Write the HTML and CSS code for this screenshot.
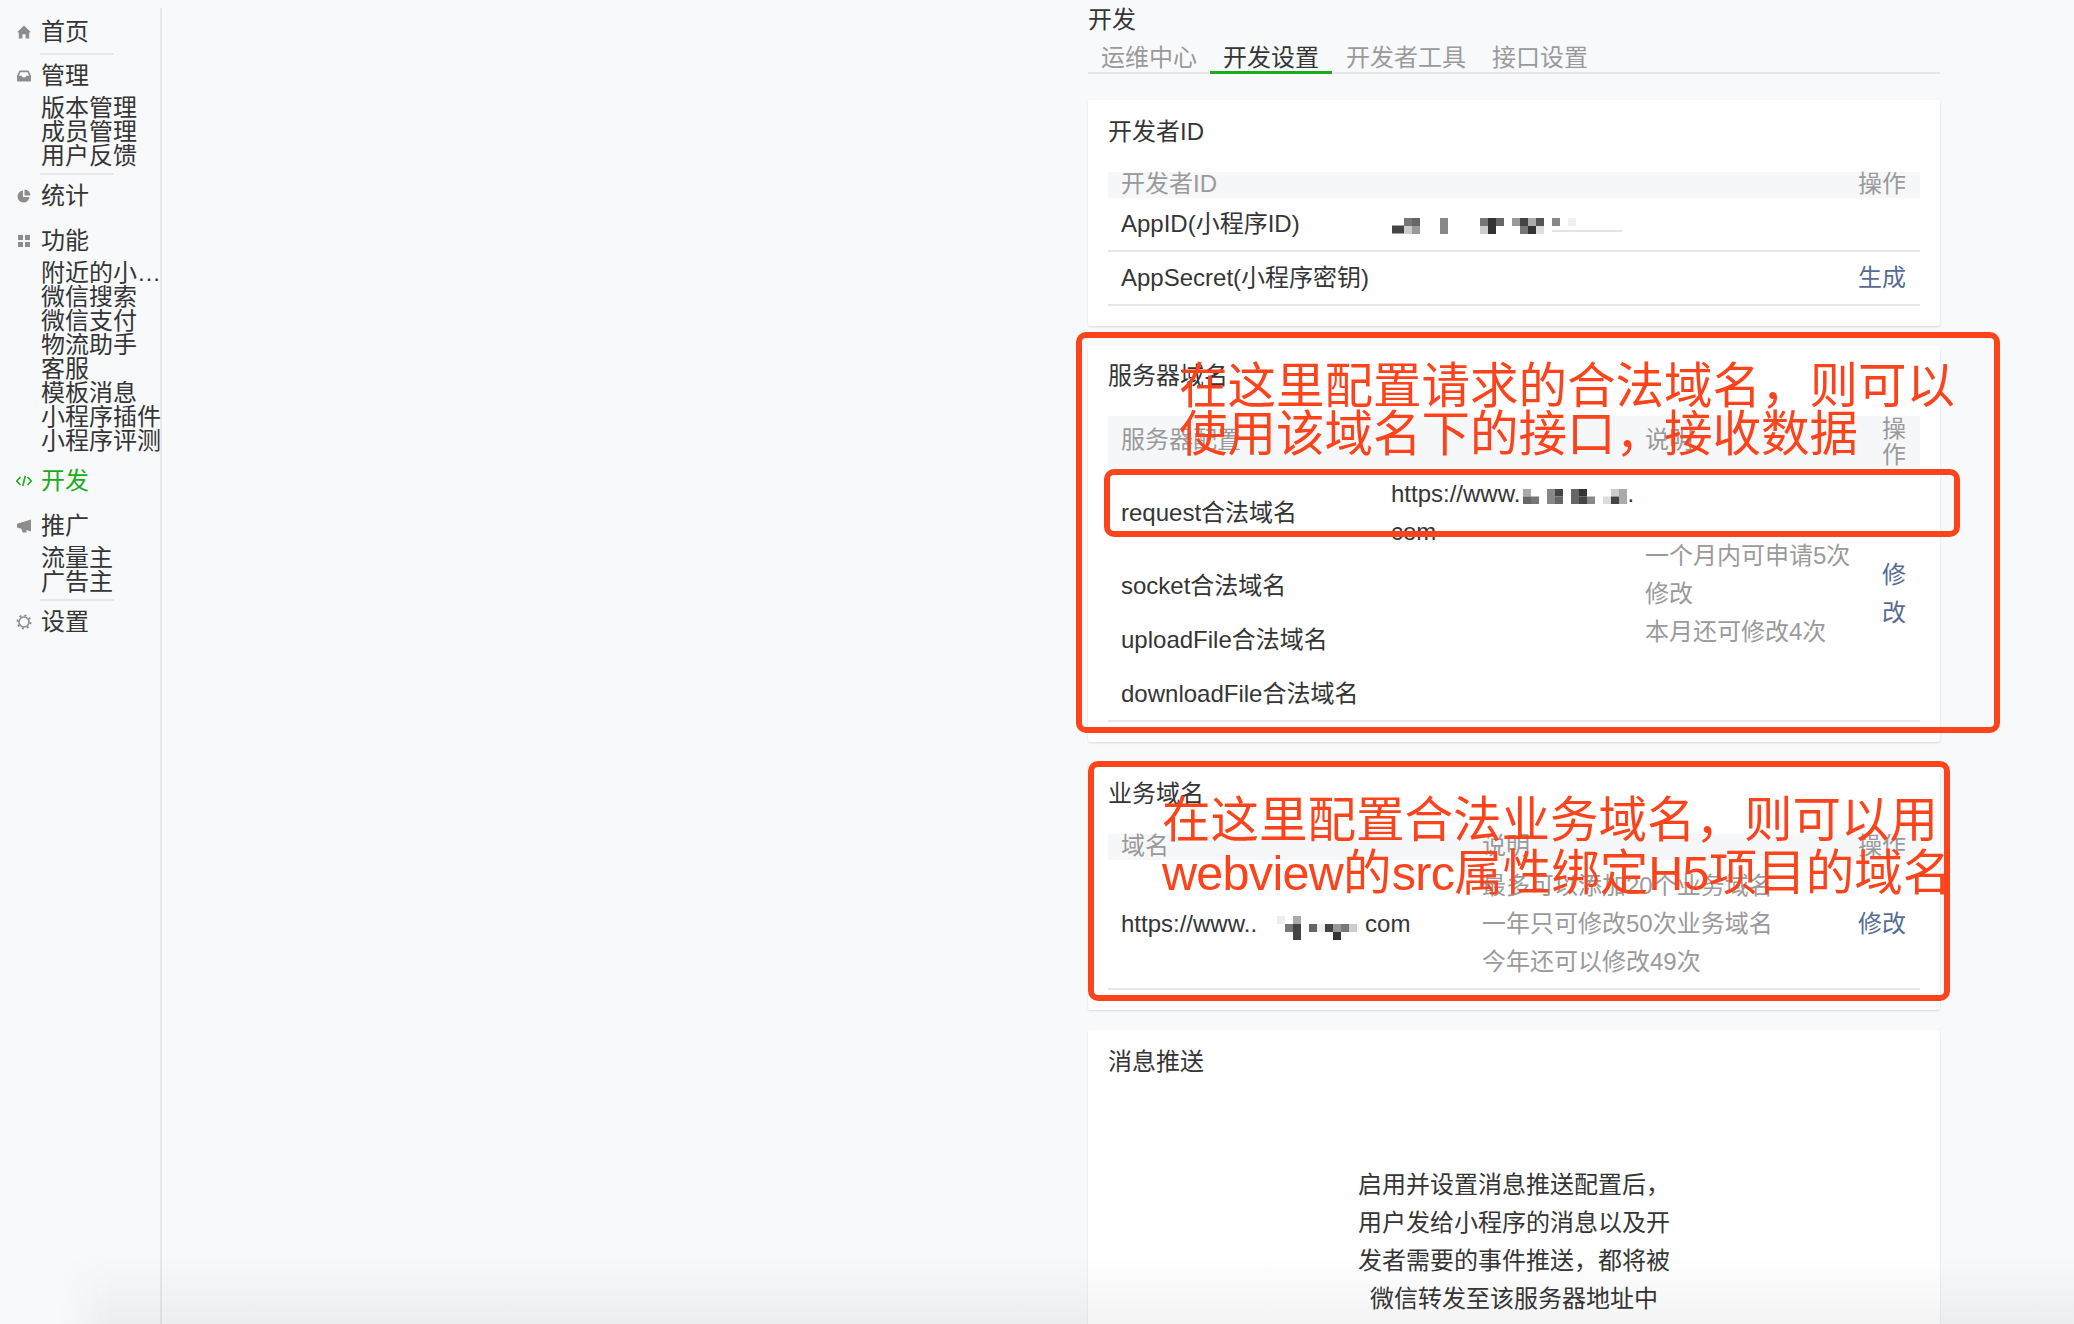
FILE: index.html
```html
<!DOCTYPE html>
<html lang="zh-CN">
<head>
<meta charset="utf-8">
<title>开发设置</title>
<link rel="stylesheet" href="styles.css">
</head>
<body>
<div class="page">
  <nav class="sidebar">
    <section class="group line">
      <div class="nav-title">
        <svg class="ico" viewBox="0 0 14 14"><path d="M7 .5l7 6.800h-1.800v6.200H8.600V9.300H5.400v4.200H1.800V7.300H0z"/></svg>
        <span>首页</span>
      </div>
    </section>
    <section class="group line has-list">
      <div class="nav-title">
        <svg class="ico" viewBox="0 0 14 14"><path d="M2.400 1.500h9.200L14 7v4.200a1.300 1.300 0 0 1-1.300 1.300H1.300A1.300 1.300 0 0 1 0 11.200V7z"/><path class="cut" d="M3.300 3.200h7.400L12 6.800H9.200a2.200 1.800 0 0 1-4.400 0H2z"/></svg>
        <span>管理</span>
      </div>
      <ul class="sub"><li>版本管理</li><li>成员管理</li><li>用户反馈</li></ul>
    </section>
    <section class="group">
      <div class="nav-title">
        <svg class="ico" viewBox="0 0 14 14"><path d="M6 1.500A6 6 0 1 0 12.500 8H6z"/><path d="M7.500 .500A6 6 0 0 1 13.500 6.500H7.500z"/></svg>
        <span>统计</span>
      </div>
    </section>
    <section class="group has-list">
      <div class="nav-title">
        <svg class="ico" viewBox="0 0 14 14"><rect x="1" y="1" width="5" height="5"/><rect x="8" y="1" width="5" height="5"/><rect x="1" y="8" width="5" height="5"/><rect x="8" y="8" width="5" height="5"/></svg>
        <span>功能</span>
      </div>
      <ul class="sub">
        <li>附近的小程序</li><li>微信搜索</li><li>微信支付</li><li>物流助手</li><li>客服</li><li>模板消息</li><li>小程序插件</li><li>小程序评测</li>
      </ul>
    </section>
    <section class="group">
      <div class="nav-title active">
        <svg class="ico ico-code" viewBox="0 0 16 14"><path d="M4.500 3L.8 7l3.700 4M11.500 3l3.700 4-3.700 4M9.300 2L6.700 12"/></svg>
        <span>开发</span>
      </div>
    </section>
    <section class="group line has-list">
      <div class="nav-title">
        <svg class="ico" viewBox="0 0 14 14"><path d="M0 4.800L14 .5v12l-4.800-1.600.6 2.600H5.600L4.300 9.700 0 8.500z"/></svg>
        <span>推广</span>
      </div>
      <ul class="sub"><li>流量主</li><li>广告主</li></ul>
    </section>
    <section class="group">
      <div class="nav-title">
        <svg class="ico ico-gear" viewBox="0 0 16 16"><circle class="ring" cx="8" cy="8" r="5"/><circle class="teeth" cx="8" cy="8" r="6.600"/></svg>
        <span>设置</span>
      </div>
    </section>
  </nav>

  <main class="main">
    <h1 class="page-title">开发</h1>
    <div class="tabs">
      <a class="tab">运维中心</a>
      <a class="tab active">开发设置</a>
      <a class="tab">开发者工具</a>
      <a class="tab">接口设置</a>
    </div>

    <section class="card">
      <h2 class="card-title">开发者ID</h2>
      <table class="tbl t-id">
        <colgroup><col class="c-a"><col><col class="c-op"></colgroup>
        <thead><tr><th>开发者ID</th><th></th><th>操作</th></tr></thead>
        <tbody>
          <tr>
            <td>AppID(小程序ID)</td>
            <td>
              <svg class="mask mask-id" viewBox="0 0 240 16">
                <rect x="3" y="7.500" width="12" height="8" fill="#444"/><rect x="15" y="0" width="8" height="8" fill="#777"/><rect x="23" y="0" width="8" height="8" fill="#666"/><rect x="15" y="8" width="8" height="8" fill="#ccc"/><rect x="23" y="8" width="8" height="8" fill="#999"/>
                <rect x="51" y="0" width="8" height="16" fill="#888"/>
                <rect x="91" y="0" width="8" height="8" fill="#777"/><rect x="99" y="0" width="8" height="16" fill="#333"/><rect x="107" y="0" width="8" height="8" fill="#666"/><rect x="91" y="8" width="8" height="8" fill="#ccc"/>
                <rect x="123" y="0" width="8" height="8" fill="#999"/><rect x="131" y="0" width="8" height="8" fill="#444"/><rect x="139" y="0" width="8" height="8" fill="#aaa"/><rect x="147" y="0" width="8" height="8" fill="#555"/><rect x="131" y="8" width="8" height="8" fill="#777"/><rect x="139" y="8" width="8" height="8" fill="#333"/><rect x="147" y="8" width="8" height="8" fill="#ddd"/>
                <rect x="163" y="0" width="8" height="8" fill="#888"/><rect x="179" y="0" width="8" height="8" fill="#f0f0f0"/><rect x="163" y="12" width="70" height="2" fill="#e4e4e4"/>
              </svg>
            </td>
            <td></td>
          </tr>
          <tr>
            <td>AppSecret(小程序密钥)</td>
            <td></td>
            <td><a class="link">生成</a></td>
          </tr>
        </tbody>
      </table>
    </section>

    <section class="card card-tight">
      <h2 class="card-title">服务器域名</h2>
      <table class="tbl t-server">
        <colgroup><col class="c-a"><col class="c-b"><col class="c-c"><col class="c-d"></colgroup>
        <thead><tr><th>服务器配置</th><th></th><th>说明</th><th>操作</th></tr></thead>
        <tbody class="quiet">
          <tr>
            <td>request合法域名</td>
            <td><span class="url">https://www.<svg class="mask mask-url" viewBox="0 0 104 15">
                <rect x="0" y="0" width="8" height="7.500" fill="#aaa"/><rect x="0" y="7.500" width="8" height="7.500" fill="#666"/><rect x="8" y="7.500" width="8" height="7.500" fill="#777"/>
                <rect x="24" y="0" width="8" height="15" fill="#888"/><rect x="32" y="0" width="8" height="7.500" fill="#444"/><rect x="32" y="7.500" width="8" height="7.500" fill="#666"/>
                <rect x="48" y="0" width="8" height="15" fill="#666"/><rect x="56" y="0" width="8" height="7.500" fill="#333"/><rect x="56" y="7.500" width="8" height="7.500" fill="#444"/><rect x="64" y="7.500" width="8" height="7.500" fill="#888"/>
                <rect x="80" y="7.500" width="8" height="7.500" fill="#ddd"/><rect x="88" y="0" width="8" height="7.500" fill="#ccc"/><rect x="96" y="0" width="8" height="15" fill="#aaa"/><rect x="88" y="7.500" width="8" height="7.500" fill="#444"/>
              </svg>.</span><br>com</td>
            <td rowspan="4" class="note">一个月内可申请5次修改<br>本月还可修改4次</td>
            <td rowspan="4"><a class="link">修改</a></td>
          </tr>
          <tr><td>socket合法域名</td><td></td></tr>
          <tr><td>uploadFile合法域名</td><td></td></tr>
          <tr class="last"><td>downloadFile合法域名</td><td></td></tr>
        </tbody>
      </table>
    </section>

    <section class="card">
      <h2 class="card-title">业务域名</h2>
      <table class="tbl t-biz">
        <colgroup><col class="c-a"><col><col class="c-op"></colgroup>
        <thead><tr><th>域名</th><th>说明</th><th>操作</th></tr></thead>
        <tbody>
          <tr>
            <td>https://www..<svg class="mask mask-biz" viewBox="0 0 80 24">
                <rect x="0" y="0" width="8" height="8" fill="#eee"/><rect x="16" y="0" width="8" height="8" fill="#aaa"/>
                <rect x="8" y="8" width="8" height="8" fill="#777"/><rect x="16" y="8" width="8" height="16" fill="#444"/>
                <rect x="32" y="8" width="8" height="8" fill="#666"/><rect x="40" y="8" width="8" height="8" fill="#eee"/><rect x="48" y="8" width="8" height="8" fill="#444"/><rect x="56" y="8" width="8" height="8" fill="#999"/><rect x="64" y="8" width="8" height="8" fill="#777"/><rect x="72" y="8" width="8" height="8" fill="#ccc"/>
                <rect x="56" y="16" width="8" height="8" fill="#333"/>
              </svg>com</td>
            <td class="note">最多可以添加20个业务域名<br>一年只可修改50次业务域名<br>今年还可以修改49次</td>
            <td><a class="link">修改</a></td>
          </tr>
        </tbody>
      </table>
    </section>

    <section class="card">
      <h2 class="card-title">消息推送</h2>
      <p class="intro">启用并设置消息推送配置后，用户发给小程序的消息以及开发者需要的事件推送，都将被微信转发至该服务器地址中</p>
    </section>

    <div class="mark mark-a"></div>
    <div class="mark mark-b"></div>
    <div class="mark mark-c"></div>
    <p class="callout callout-a">在这里配置请求的合法域名，则可以<br>使用该域名下的接口，接收数据</p>
    <p class="callout callout-b">在这里配置合法业务域名，则可以用<br><span class="latin">webview</span>的<span class="latin">src</span>属性绑定<span class="latin">H5</span>项目的域名</p>
  </main>
</div>
<div class="fade"></div>
</body>
</html>
```

FILE: styles.css
```css
* { box-sizing: border-box; }

html, body {
  margin: 0;
  height: 1324px;
  overflow: hidden;
  background: #f8f9fb;
}

body {
  position: relative;
  font-family: "Liberation Sans", "Noto Sans CJK SC", sans-serif;
  font-size: 24px;
  color: #353535;
}

.page {
  display: flex;
  align-items: flex-start;
  height: 1324px;
  overflow: hidden;
}

/* sidebar */
.sidebar {
  flex: none;
  width: 162px;
  height: 1316px;
  margin-top: 8px;
  padding-top: 3px;
  border-right: 2px solid #e7e7eb;
}

.group { padding-top: 9px; }

.group::after {
  content: "";
  display: block;
  width: 74px;
  height: 2px;
  margin: 10px 0 0 40px;
}

.group.line::after { margin-top: 9px; background: #e7e7eb; }
.group.has-list::after { margin-top: 5px; }

.nav-title {
  display: flex;
  align-items: center;
  height: 24px;
  line-height: 24px;
  padding-left: 17px;
}

.nav-title.active { color: #1aad19; }

.ico {
  flex: none;
  width: 14px;
  height: 14px;
  margin-right: 10px;
  fill: #8d8d8d;
}

.ico .cut { fill: #f8f9fb; }

.ico-code {
  width: 16px;
  margin-left: -1px;
  margin-right: 9px;
  fill: none;
  stroke: #1aad19;
  stroke-width: 1.6;
}

.ico-gear {
  width: 16px;
  height: 16px;
  margin-left: -1px;
  margin-right: 9px;
  fill: none;
  stroke: #8d8d8d;
}

.ico-gear .ring { stroke-width: 1.6; }
.ico-gear .teeth { stroke-width: 1.8; stroke-dasharray: 2.2 3; }

.sub {
  list-style: none;
  margin: 8px 0 0;
  padding: 0 0 0 41px;
}

.sub li {
  height: 24px;
  line-height: 24px;
  width: 121px;
  white-space: nowrap;
  overflow: hidden;
  text-overflow: ellipsis;
}

/* main column */
.main {
  position: relative;
  flex: none;
  width: 852px;
  margin-left: 926px;
}

.page-title {
  margin: 0;
  padding-top: 1px;
  font-size: 24px;
  font-weight: 400;
  line-height: 38px;
}

.tabs {
  display: flex;
  margin-top: 5px;
  margin-bottom: 26px;
  border-bottom: 2px solid #e7e7eb;
}

.tab {
  padding: 0 13px;
  line-height: 27px;
  margin-bottom: -2px;
  border-bottom: 3px solid transparent;
  color: #9a9a9a;
}

.tab.active {
  margin-right: 1px;
  color: #353535;
  border-bottom-color: #1aad19;
}

.card {
  margin-bottom: 20px;
  padding: 13px 20px 20px;
  background: #fff;
  border-radius: 2px;
  box-shadow: 0 1px 2px rgba(150, 150, 150, .3);
}

.card-tight { padding-top: 11px; }

.card-title {
  margin: 0 0 21px;
  font-size: 24px;
  font-weight: 400;
  line-height: 38px;
}

/* tables */
.tbl {
  width: 100%;
  table-layout: fixed;
  border-collapse: separate;
  border-spacing: 0;
}

.tbl th {
  padding: 0 14px 2px;
  background: #f6f7f9;
  color: #9a9a9a;
  font-weight: 400;
  line-height: 24px;
  text-align: left;
  vertical-align: middle;
}

.t-server th { padding-bottom: 4px; }
.t-server th:last-child { padding-bottom: 0; line-height: 26px; }

.tbl td {
  padding: 7px 14px;
  line-height: 38px;
  border-bottom: 2px solid #e7e7eb;
  vertical-align: middle;
}

.tbl th:first-child, .tbl td:first-child {
  padding-left: 13px;
  padding-right: 0;
  white-space: nowrap;
}

.quiet td { border-bottom-color: transparent; }
.quiet .last td { border-bottom-color: #e7e7eb; }
.quiet td[rowspan] { border-bottom-color: #e7e7eb; }

.url { white-space: nowrap; }

.c-a { width: 269px; }
.c-b { width: 254px; }
.c-c { width: 237px; }
.c-d { width: 52px; }
.c-op { width: 76px; }

.t-biz .c-a { width: 360px; }

.tbl .note { color: #9a9a9a; }

.link { color: #576b95; }

.mask { display: inline-block; vertical-align: middle; filter: blur(.5px); }
.mask-id { width: 240px; height: 16px; margin-left: -2px; }
.mask-url { width: 104px; height: 15px; margin: 0 0 0 3px; vertical-align: -2px; }
.mask-biz { width: 80px; height: 24px; margin: 0 8px 0 20px; vertical-align: -8px; }

.intro {
  width: 312px;
  margin: 85px auto 0;
  line-height: 38px;
  text-align: center;
}

/* annotations drawn over the page */
.mark {
  position: absolute;
  border: 6px solid #fb431c;
  border-radius: 10px;
}

.mark-a { left: -12px; top: 332px; width: 924px; height: 401px; }
.mark-b { left: 16px; top: 469px; width: 856px; height: 68px; }
.mark-c { left: 0; top: 761px; width: 862px; height: 240px; }

.callout {
  position: absolute;
  margin: 0;
  color: #fb431c;
  font-size: 48.5px;
  white-space: nowrap;
}

.callout .latin { letter-spacing: -.7px; }

.callout-a { left: 91px; top: 362px; line-height: 48px; }
.callout-b { left: 74px; top: 794px; line-height: 53px; }

.fade {
  position: absolute;
  left: 60px;
  right: 0;
  bottom: 0;
  height: 70px;
  background: linear-gradient(to bottom, rgba(60, 60, 60, 0), rgba(60, 60, 60, .06));
  -webkit-mask-image: linear-gradient(to right, transparent, #000 50px);
  mask-image: linear-gradient(to right, transparent, #000 50px);
}
```
